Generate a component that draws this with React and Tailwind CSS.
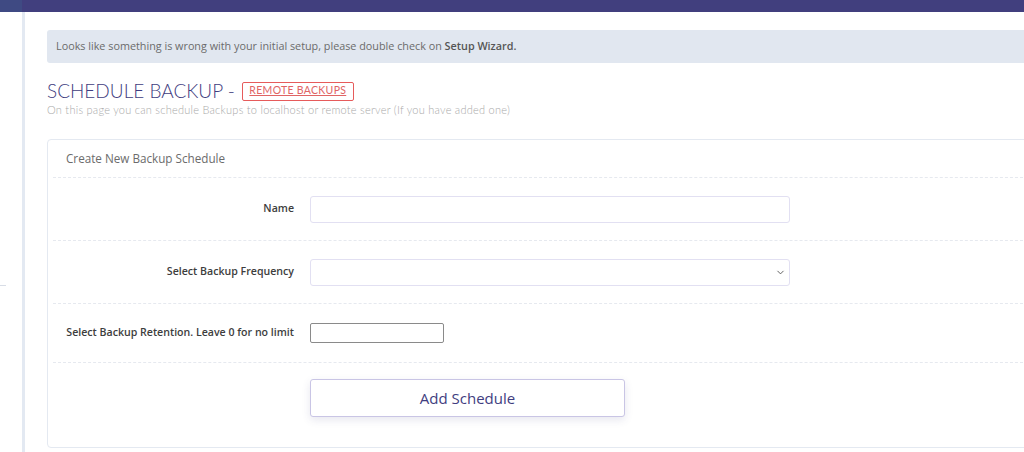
import { ChevronDown } from 'lucide-react';

const rows = [
    { label: 'Name', type: 'text' },
    { label: 'Select Backup Frequency', type: 'select' },
    { label: 'Select Backup Retention. Leave 0 for no limit', type: 'small' },
];

const App = () => {
    return (
        <div className="w-[1024px] h-[452px] overflow-hidden bg-white font-['Open_Sans',sans-serif]">
            {/* top bar */}
            <div className="flex h-[12px]">
                <div className="w-[22px] bg-[#3f4a83]" />
                <div className="flex-1 bg-[#413f7e]" />
            </div>

            <div className="flex h-[440px]">
                {/* sidebar */}
                <div className="w-[22px] shrink-0 bg-white pt-[273px]">
                    <div className="h-px w-[6px] bg-[#d8dde6]" />
                </div>
                <div className="w-[3px] shrink-0 bg-[#e3e9f2]" />

                {/* main */}
                <div className="flex-1 pl-[22px] pt-[18px] min-w-0">
                    <div className="-mr-[20px] h-[33px] rounded-l-[3px] bg-[#e1e7f0] pl-[9px] flex items-center text-[10.8px] text-[#6b6b6b]">
                        <span>
                            Looks like something is wrong with your initial setup, please double check on{' '}
                            <span className="font-semibold text-[#555]">Setup Wizard.</span>
                        </span>
                    </div>

                    <div className="mt-[18px] flex items-center gap-[7px]">
                        <h1 className="font-['Lato',sans-serif] font-light text-[19px] leading-[20px] text-[#3f3d80]">
                            SCHEDULE BACKUP -
                        </h1>
                        <a className="h-[19px] w-[112px] flex items-center justify-center rounded-[2px] border-[1.5px] border-[#e65b5b] font-['Lato',sans-serif] text-[10.5px] tracking-[0.3px] text-[#e06464] underline">
                            REMOTE BACKUPS
                        </a>
                    </div>
                    <p className="mt-[2px] font-['Lato',sans-serif] font-light text-[11px] tracking-[0.25px] leading-[14px] text-[#a9a9a9]">
                        On this page you can schedule Backups to localhost or remote server (If you have added one)
                    </p>

                    <div className="mt-[22px] -mr-[20px] h-[309px] rounded-[4px] border border-[#e4e9f1] px-[5px]">
                        <div className="h-[37px] pl-[13px] flex items-center text-[11.7px] text-[#6b6b6b]">
                            Create New Backup Schedule
                        </div>
                        {rows.map((row) => (
                            <div
                                key={row.label}
                                className={`flex items-center border-t border-dashed border-[#e6e9ef] ${row.type === 'small' ? 'h-[59px]' : 'h-[63px]'}`}
                            >
                                <div className="w-[241px] whitespace-nowrap text-right text-[10.6px] font-semibold text-[#3d3d3d]">
                                    {row.label}
                                </div>
                                <div className="ml-[16px]">
                                    {row.type === 'text' && (
                                        <div className="h-[27px] w-[480px] rounded-[3px] border border-[#e2e0f2] bg-white" />
                                    )}
                                    {row.type === 'select' && (
                                        <div className="h-[27px] w-[480px] rounded-[3px] border border-[#e2e0f2] bg-white flex items-center justify-end pr-[3px]">
                                            <ChevronDown className="w-[11px] h-[11px] text-[#555]" strokeWidth={2} />
                                        </div>
                                    )}
                                    {row.type === 'small' && (
                                        <div className="h-[20px] w-[134px] rounded-[2px] border border-[#8a8a8a] bg-white" />
                                    )}
                                </div>
                            </div>
                        ))}
                        <div className="flex border-t border-dashed border-[#e6e9ef] pt-[16px]">
                            <div className="w-[241px]" />
                            <button className="ml-[16px] h-[38px] w-[315px] rounded-[3px] border border-[#c9c5e5] bg-white text-[15px] text-[#3f3d80] shadow-[0_3px_8px_rgba(60,60,120,0.12)]">
                                Add Schedule
                            </button>
                        </div>
                    </div>
                </div>
            </div>
        </div>
    );
};

export default App;
